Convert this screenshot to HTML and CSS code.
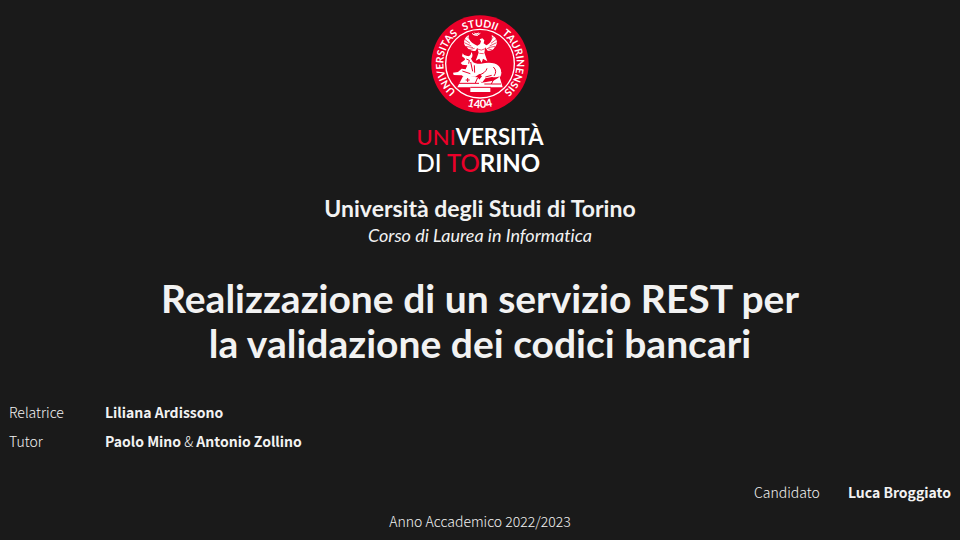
FILE: index.html
```
<!DOCTYPE html>
<html lang="it">
<head>
<meta charset="utf-8">
<title>Realizzazione di un servizio REST per la validazione dei codici bancari</title>
<link rel="stylesheet" href="styles.css">
</head>
<body>
<main class="slide">
  <header class="brand">
    <svg class="seal" viewBox="0 0 330 330" role="img" aria-label="Sigillo">
      <defs>
        <path id="ring" d="M165 277A110 110 0 0 1 165 57A110 110 0 0 1 165 277"/>
        <path id="ring-low" d="M31 166A134 134 0 0 0 299 166"/>
      </defs>
      <circle cx="165" cy="168" r="146" fill="#ea0029"/>
      <circle cx="165" cy="167" r="103" fill="none" stroke="#fff" stroke-width="4"/>
      <g class="seal-text">
        <text><textPath href="#ring" startOffset="25.5%">UNIVERSITAS</textPath></text>
        <text><textPath href="#ring" startOffset="50%">STUDII</textPath></text>
        <text><textPath href="#ring" startOffset="74.5%">TAURINENSIS</textPath></text>
        <text class="seal-year"><textPath href="#ring-low" startOffset="50%">1404</textPath></text>
      </g>
      <g fill="#fff">
        <path d="M114 205L97 238H136V252H196V238H233L224 207L205 218L170 224L158 208Z"/>
        <path d="M131 81C122 86 117 95 117 105C118 112 122 115 126 118C131 126 142 131 152 128L157 119L161 134L152 158L163 152L170 164L174 152L187 160L178 134L181 118L188 128C198 130 206 125 209 118C213 114 216 108 216 102C215 92 209 85 200 81C203 94 197 107 184 112L176 106L178 97L172 91L164 94L168 100L165 108L157 113C141 107 130 96 131 81Z"/>
        <path d="M113 136C119 145 126 143 130 145C136 144 138 139 139 132C145 140 142 148 138 152L144 162C149 166 158 168 168 167C190 163 211 163 221 174C230 184 230 196 224 205C214 209 207 208 201 207L181 211L172 223L160 218L171 205L163 198L151 206L118 208L110 202L86 201L84 194L99 192L110 182L122 184L127 172L112 170L107 165L120 155L119 151L111 145Z"/>
      </g>
      <g fill="none" stroke="#fff" stroke-width="3">
        <path d="M141 76Q152 88 166 76M145 80L162 75M148 74L158 84"/>
        <path d="M218 176Q236 194 221 211"/>
      </g>
      <g fill="none" stroke="#ea0029" stroke-width="2">
        <path d="M119 94L135 106M118 104L139 114M122 115L144 119M127 86L139 99M132 125L149 121M214 94L198 106M215 104L194 114M210 115L190 119M205 86L196 99M201 126L186 121"/>
        <path d="M157 123Q169 130 181 122M163 136L176 137"/>
      </g>
      <g fill="none" stroke="#ea0029" stroke-width="3">
        <path d="M124 153L133 157L131 167M137 162L143 190M148 172L149 194M162 201Q182 195 186 181M205 177Q218 189 207 204M181 207L200 202M112 189L136 197"/>
        <path d="M102 226H162M136 238H198M178 228H228M128 210V222M122 216H134M158 209L151 225M205 216L199 228"/>
      </g>
    </svg>
    <div class="wordmark">
      <div><span class="red">UNI</span><b>VERSITÀ</b></div>
      <div class="city">DI <span class="red">TO</span><b>RINO</b></div>
    </div>
  </header>
  <h2 class="school">Università degli Studi di Torino</h2>
  <p class="course">Corso di Laurea in Informatica</p>
  <h1 class="title">Realizzazione di un servizio REST per<br>la validazione dei codici bancari</h1>
  <dl class="people">
    <dt>Relatrice</dt><dd><b>Liliana Ardissono</b></dd>
    <dt>Tutor</dt><dd><b>Paolo Mino</b> &amp; <b>Antonio Zollino</b></dd>
  </dl>
  <dl class="candidate">
    <dt>Candidato</dt><dd><b>Luca Broggiato</b></dd>
  </dl>
  <p class="year">Anno Accademico 2022/2023</p>
</main>
</body>
</html>
```
FILE: styles.css
```
* { box-sizing: border-box; }
body {
  margin: 0;
  background: #1a1a1a;
  color: #f2f2f2;
  font-family: "Noto Sans CJK SC", "Open Sans", sans-serif;
  font-size: 14px;
  line-height: 29px;
}
h1, h2, p, dl, dd { margin: 0; }
.slide {
  display: flex;
  flex-direction: column;
  padding: 8px 9px 0;
  text-align: center;
}
.brand {
  display: flex;
  flex-direction: column;
  align-items: center;
}
.seal { width: 110px; height: 110px; }
.seal-text {
  fill: #fff;
  font-family: Lato, sans-serif;
  font-size: 31px;
  font-weight: 700;
  text-anchor: middle;
}
.seal-year { font-size: 34px; }
.wordmark {
  margin-top: 6px;
  color: #fff;
  font-family: Lato, sans-serif;
  font-size: 22px;
  font-weight: 500;
  line-height: 26px;
  text-align: left;
}
.city { font-size: 24px; }
.red { color: #ea0029; }
.school {
  margin-top: 18px;
  font-family: Lato, sans-serif;
  font-size: 23px;
  line-height: 28px;
}
.course {
  font-family: Lato, sans-serif;
  font-size: 18px;
  font-style: italic;
  font-variant-ligatures: none;
  line-height: 26px;
}
.title {
  margin-top: 28px;
  font-family: Lato, sans-serif;
  font-size: 39px;
  line-height: 45px;
}
.people {
  display: grid;
  grid-template-columns: 96px 1fr;
  margin-top: 32px;
  text-align: left;
}
.candidate {
  display: flex;
  justify-content: flex-end;
  gap: 28px;
  margin-top: 22px;
}
dt, dd, .year { font-weight: 300; }
b { font-weight: 700; }
```
